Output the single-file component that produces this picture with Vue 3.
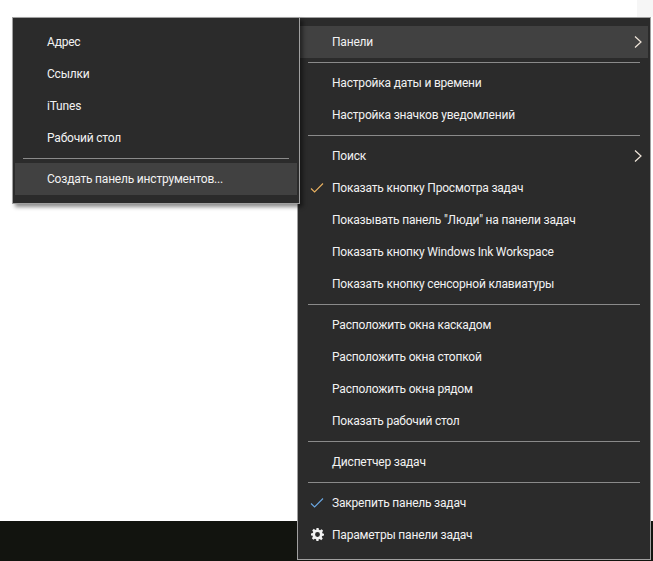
<template>
  <div class="screen">
    <div class="corner"></div>
    <div class="taskbar"></div>
    <div class="menu main-menu">
      <template v-for="(item, i) in items" :key="i">
        <div v-if="item.sep" class="sep"></div>
        <div v-else class="item" :class="{ active: item.active }">
          <svg v-if="item.check" class="check" width="14" height="12" viewBox="0 0 14 12" fill="none">
            <path d="M1 6.500 4.600 10 13 1.500" :stroke="item.check" stroke-width="1.100" />
          </svg>
          <svg v-if="item.gear" class="gear" width="13" height="13" viewBox="0 0 24 24">
            <path fill="#f2f2f2" fill-rule="evenodd" d="M10 0h4l.6 3.300 2.200.9L19.600 2.300l2.800 2.800-1.900 2.800.9 2.200L24 10.700v3.300l-3.300.6-.9 2.200 1.900 2.800-2.800 2.800-2.800-1.900-2.200.9L14 24h-4l-.6-3.300-2.200-.9-2.800 1.900-2.800-2.800 1.900-2.800-.9-2.200L0 13.900v-3.900l3.300-.6.9-2.200-1.900-2.800 2.800-2.800 2.800 1.900 2.200-.9zM12 7.500a4.500 4.500 0 1 0 0 9 4.500 4.500 0 0 0 0-9z" />
          </svg>
          <span>{{ item.label }}</span>
          <svg v-if="item.arrow" class="arrow" width="8" height="12" viewBox="0 0 8 12" fill="none">
            <path d="M1 .5 7 6 1 11.500" stroke="#f0e6da" stroke-width="1.200" />
          </svg>
        </div>
      </template>
    </div>
    <div class="menu sub-menu">
      <template v-for="(item, i) in toolbars" :key="i">
        <div v-if="item.sep" class="sep"></div>
        <div v-else class="item" :class="{ active: item.active }">
          <span>{{ item.label }}</span>
        </div>
      </template>
    </div>
  </div>
</template>

<script setup>
const toolbars = [
  { label: 'Адрес' },
  { label: 'Ссылки' },
  { label: 'iTunes' },
  { label: 'Рабочий стол' },
  { sep: true },
  { label: 'Создать панель инструментов...', active: true }
]

const items = [
  { label: 'Панели', arrow: true, active: true },
  { sep: true },
  { label: 'Настройка даты и времени' },
  { label: 'Настройка значков уведомлений' },
  { sep: true },
  { label: 'Поиск', arrow: true },
  { label: 'Показать кнопку Просмотра задач', check: '#e8b060' },
  { label: 'Показывать панель "Люди" на панели задач' },
  { label: 'Показать кнопку Windows Ink Workspace' },
  { label: 'Показать кнопку сенсорной клавиатуры' },
  { sep: true },
  { label: 'Расположить окна каскадом' },
  { label: 'Расположить окна стопкой' },
  { label: 'Расположить окна рядом' },
  { label: 'Показать рабочий стол' },
  { sep: true },
  { label: 'Диспетчер задач' },
  { sep: true },
  { label: 'Закрепить панель задач', check: '#6aa6e0' },
  { label: 'Параметры панели задач', gear: true }
]
</script>

<style>
html, body {
  margin: 0;
  background: #fff;
}
</style>

<style scoped>
.screen {
  position: relative;
  width: 653px;
  height: 561px;
  overflow: hidden;
  background: #fff;
  font-family: Roboto, "Open Sans", sans-serif;
  font-size: 12px;
  letter-spacing: -0.2px;
  color: #f2f2f2;
}

.corner {
  position: absolute;
  top: 0;
  right: 0;
  width: 16px;
  height: 17px;
  background: #f6f6f6;
}

.taskbar {
  position: absolute;
  left: 0;
  right: 0;
  bottom: 0;
  height: 40px;
  background: #12140f;
}

.menu {
  position: absolute;
  box-sizing: border-box;
  background: #2b2b2b;
  border: 1px solid #a0a0a0;
}

.sub-menu {
  left: 12px;
  top: 17px;
  width: 288px;
  padding: 8px 2px;
  box-shadow: 3px 3px 4px rgba(0, 0, 0, 0.45);
}

.main-menu {
  left: 297px;
  top: 17px;
  width: 354px;
  height: 543px;
  padding: 8px 2px;
}

.item {
  position: relative;
  display: flex;
  align-items: center;
  height: 32px;
  padding-left: 32px;
}

.item.active {
  background: #414141;
}

.sep {
  height: 1px;
  margin: 4px 8px;
  background: #8a8a8a;
}

.check {
  position: absolute;
  left: 10px;
  top: 10px;
}

.gear {
  position: absolute;
  left: 11px;
  top: 9px;
}

.arrow {
  position: absolute;
  right: 6px;
  top: 10px;
}
</style>
